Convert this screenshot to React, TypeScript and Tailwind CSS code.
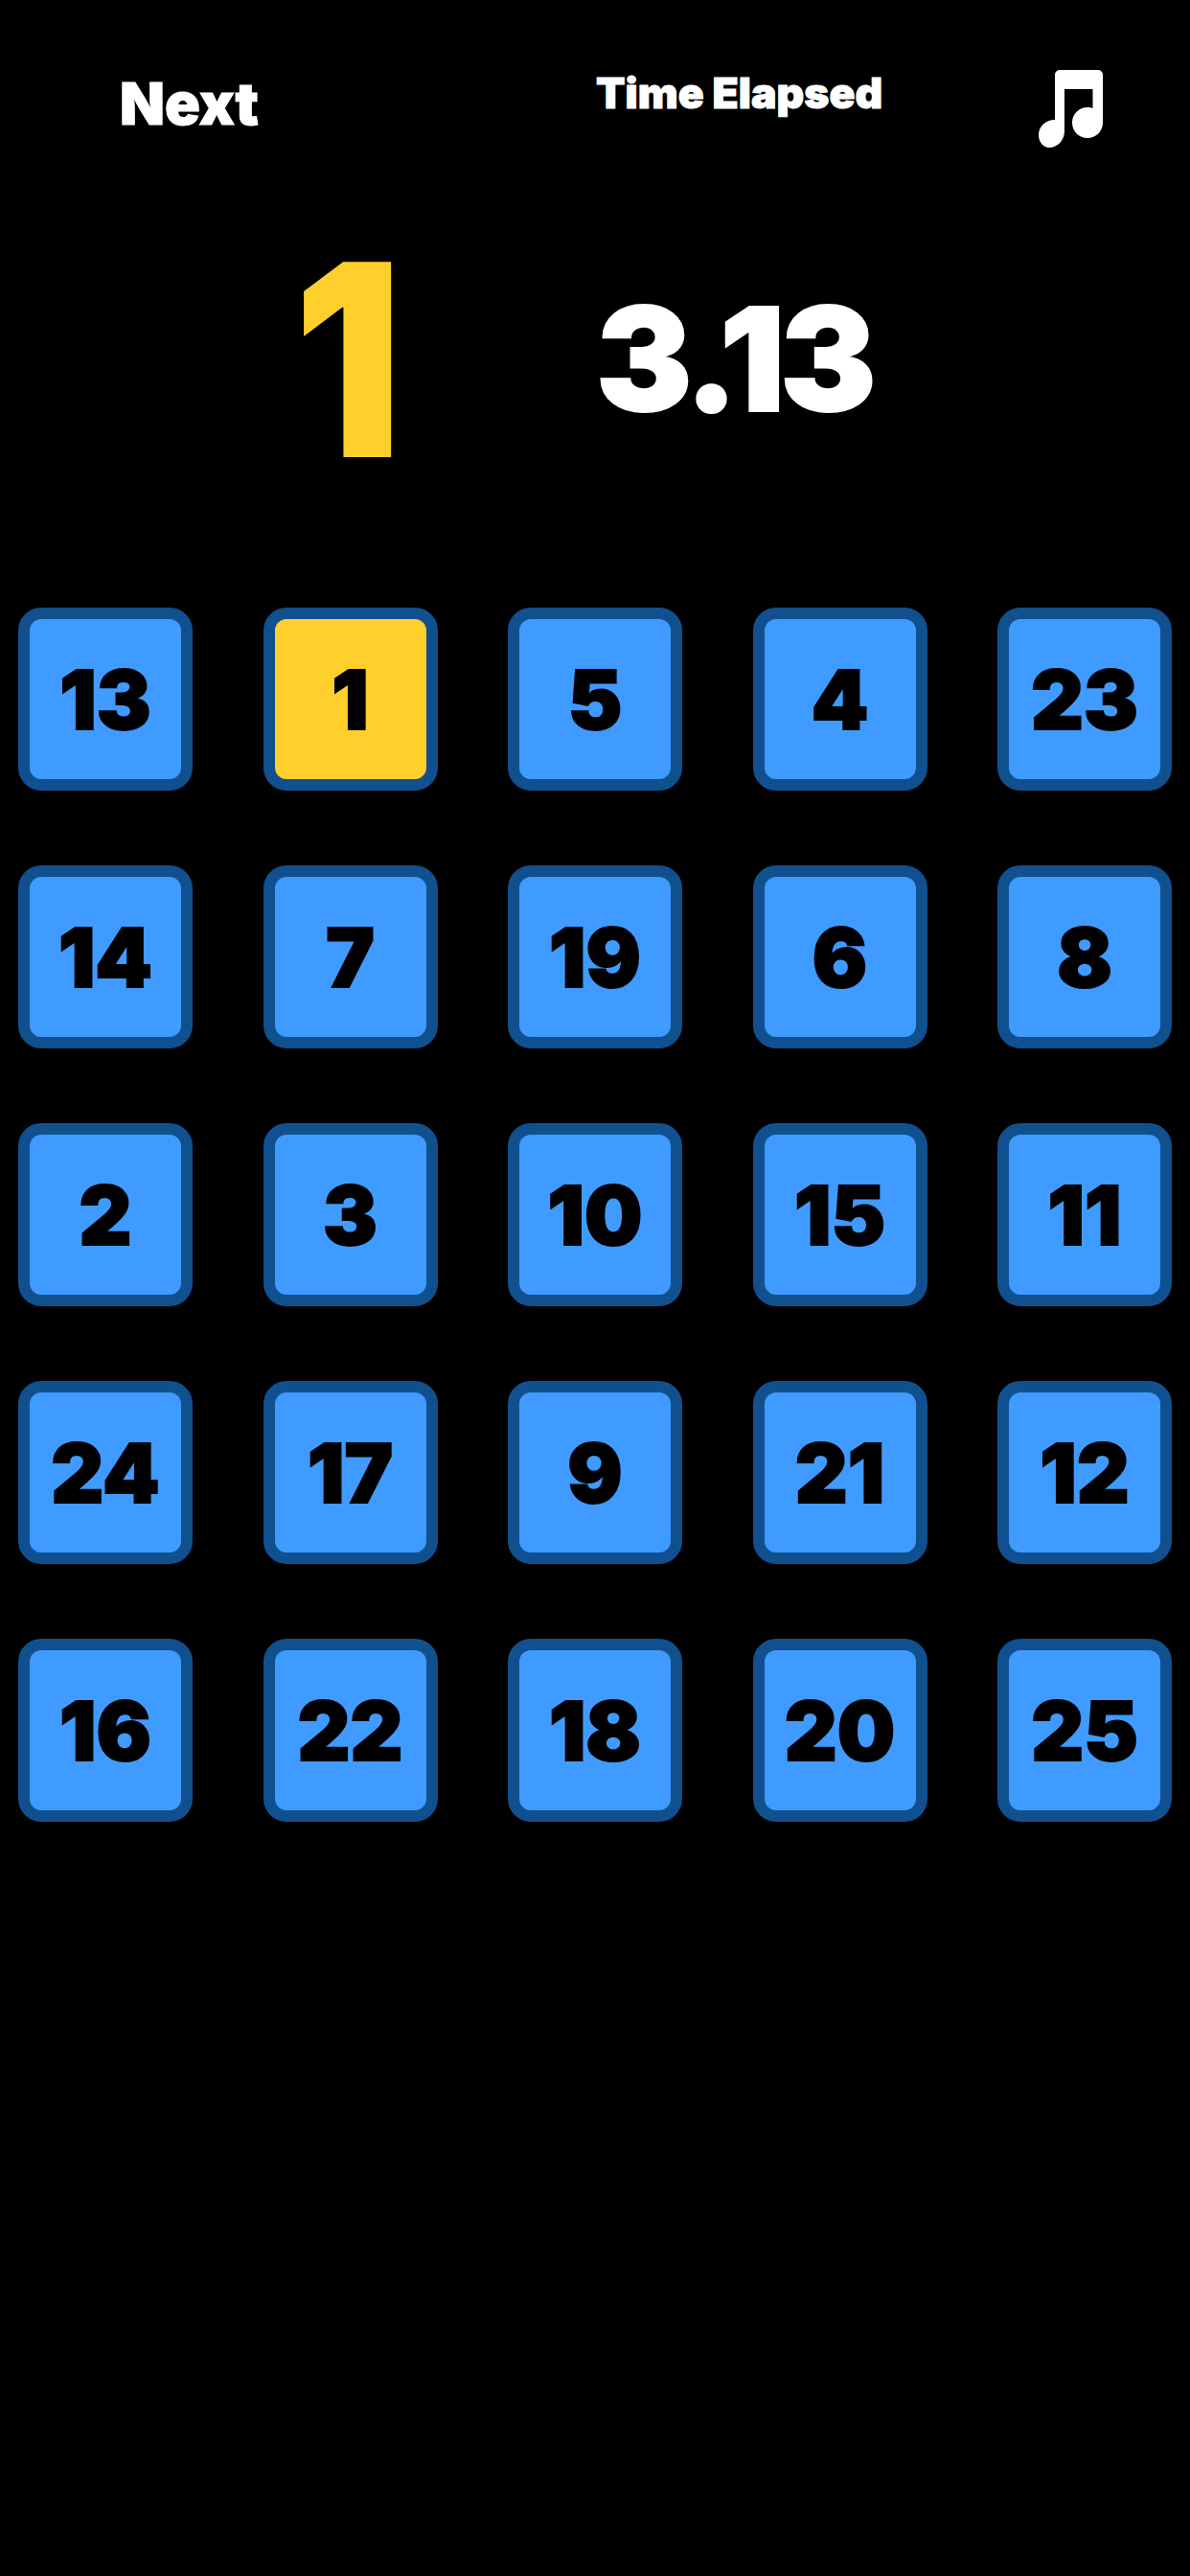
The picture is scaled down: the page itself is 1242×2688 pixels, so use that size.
const rows = [
  [13, 1, 5, 4, 23],
  [14, 7, 19, 6, 8],
  [2, 3, 10, 15, 11],
  [24, 17, 9, 21, 12],
  [16, 22, 18, 20, 25],
];

const NEXT = 1;

function MusicIcon() {
  return (
    <svg width="68" height="84" viewBox="0 0 68 84" fill="#fff" className="mt-[5px]">
      <path d="M17 6a5 5 0 0 1 5-5h40a5 5 0 0 1 5 5v50c0 9-7 16-16 16s-16-7-16-16 7-16 16-16c2 0 4 .3 5.500 1V21H27v44c0 9-7 17-16 17-6 0-11-6-11-13 0-9 7-16 17-16z" />
    </svg>
  );
}

function Tile({ value }: { value: number }) {
  return (
    <div
      className={`flex h-[191px] w-[182px] items-center justify-center rounded-[24px] border-[12px] border-[#11508f] pt-[2px] text-[85px] leading-none font-black text-black [-webkit-text-stroke:2px_black] ${
        value === NEXT ? "bg-[#ffcf2b]" : "bg-[#3f9bff]"
      }`}
    >
      {value}
    </div>
  );
}

export default function App() {
  return (
    <div className="h-[2688px] w-[1242px] overflow-hidden bg-black font-['Inter',sans-serif] text-white">
      <div className="grid grid-cols-[622px_1fr] pt-[67px]">
        <div className="pl-[125px] pt-[6px] text-[61px] leading-[70px] font-black [-webkit-text-stroke:1px_white]">Next</div>
        <div className="flex items-start justify-between pr-[90px]">
          <span className="text-[44.5px] leading-[60px] font-black [-webkit-text-stroke:1px_white]">Time Elapsed</span>
          <MusicIcon />
        </div>
        <div className="pl-[306px] pt-[80px] text-[280px] leading-[280px] font-black text-[#ffcf2b]">
          <span className="inline-block origin-left scale-x-90">{NEXT}</span>
        </div>
        <div className="pt-[119px] text-[150px] leading-[200px] font-black tracking-[-5px] [-webkit-text-stroke:2px_white]">3.13</div>
      </div>
      <div className="mt-[118px] flex flex-col gap-[78px] px-[19px]">
        {rows.map((row, i) => (
          <div key={i} className="flex justify-between">
            {row.map((value) => (
              <Tile key={value} value={value} />
            ))}
          </div>
        ))}
      </div>
    </div>
  );
}
